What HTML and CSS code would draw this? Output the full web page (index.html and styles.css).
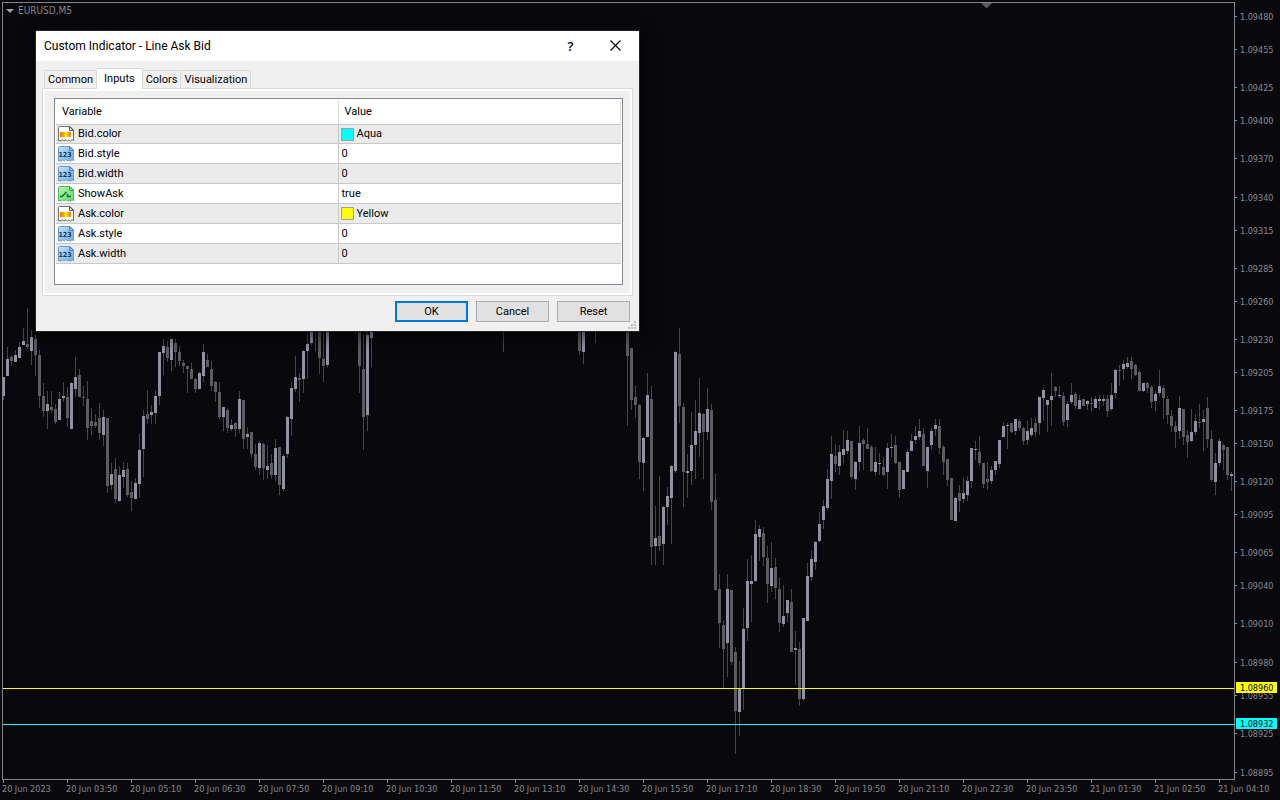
FILE: index.html
```html
<!DOCTYPE html>
<html lang="en">
<head>
<meta charset="utf-8">
<title>EURUSD,M5</title>
<link rel="stylesheet" href="styles.css">
</head>
<body>
<svg class="defs" aria-hidden="true">
  <defs>
    <linearGradient id="blue" x1="0" y1="0" x2="1" y2="1"><stop offset="0" stop-color="#c4e2fb"/><stop offset="1" stop-color="#6fa9e0"/></linearGradient>
    <linearGradient id="green" x1="0" y1="0" x2="1" y2="1"><stop offset="0" stop-color="#b4f5b4"/><stop offset="1" stop-color="#5fdc6c"/></linearGradient>
    <linearGradient id="orange" x1="0" y1="0" x2="1" y2="0"><stop offset="0" stop-color="#ff7000"/><stop offset=".2" stop-color="#ff8c00"/><stop offset=".55" stop-color="#fff000"/><stop offset=".85" stop-color="#ff9000"/><stop offset="1" stop-color="#ff7000"/></linearGradient>
    <symbol id="i-num" viewBox="0 0 16 16">
      <path d="M.5 1.5q0-1 1-1H12L15.500 4V15l-1.500-1.500L12.500 15.500 11 14 9.500 15 8 13.500 6 15 4.500 13.500 3 15.500 2 14 .5 15z" fill="url(#blue)" stroke="#6a9bcb"/>
      <path d="M11.500.5v4h4z" fill="#8fbce6" stroke="#4e86bd"/>
      <text x="7" y="11" text-anchor="middle" class="icon-text">123</text>
    </symbol>
    <symbol id="i-bool" viewBox="0 0 16 16">
      <path d="M.5 1.5q0-1 1-1H12L15.500 4V15l-1.500-1.500L12.500 15.500 11 14 9.500 15 8 13.500 6 15 4.500 13.500 3 15.500 2 14 .5 15z" fill="url(#green)" stroke="#4dbb5c"/>
      <path d="M11.500.5v4h4z" fill="#8ae894" stroke="#3aa64b"/>
      <path d="M2 10.500h2l4.500-4.500M9.500 8v2.500h3.500" fill="none" stroke="#12701c" stroke-width="1.500"/>
    </symbol>
    <symbol id="i-color" viewBox="0 0 16 16">
      <path d="M.5 1.500q0-1 1-1H12L15.500 4V15l-1.500-1.500L12.500 15.500 11 14 9.500 15 8 13.500 6 15 4.500 13.500 3 15.500 2 14 .5 15z" fill="#fff" stroke="#707070"/>
      <path d="M11.500.5v4h4z" fill="#ddd" stroke="#555"/>
      <path d="M2 6h11v5H2z" fill="url(#orange)"/>
    </symbol>
  </defs>
</svg>

<main class="terminal">
  <div class="plot">
    <svg class="canvas" id="plot" role="img" aria-label="EURUSD five-minute candlestick chart"></svg>
    <div class="symbol"><span class="caret"></span>EURUSD,M5</div>
  </div>
  <svg class="axis" id="prices"></svg>
  <svg class="axis times" id="times"></svg>
</main>

<section class="dialog" role="dialog" aria-labelledby="dialog-title">
  <header class="titlebar">
    <h1 id="dialog-title">Custom Indicator - Line Ask Bid</h1>
    <button class="caption help" aria-label="Help">?</button>
    <button class="caption" aria-label="Close"><svg width="11" height="11" viewBox="0 0 11 11"><path d="M.5.5l10 10M10.500.5l-10 10" stroke="#000" stroke-width="1.100"/></svg></button>
  </header>
  <div class="content">
    <nav class="tabs" role="tablist">
      <button class="tab" role="tab">Common</button>
      <button class="tab active" role="tab" aria-selected="true">Inputs</button>
      <button class="tab" role="tab">Colors</button>
      <button class="tab" role="tab">Visualization</button>
    </nav>
    <div class="panel">
      <div class="list">
        <table>
          <thead><tr><th>Variable</th><th>Value</th></tr></thead>
          <tbody>
            <tr><td><div class="cell"><svg class="icon"><use href="#i-color"/></svg>Bid.color</div></td><td><div class="cell color"><span class="swatch aqua"></span>Aqua</div></td></tr>
            <tr><td><div class="cell"><svg class="icon"><use href="#i-num"/></svg>Bid.style</div></td><td><div class="cell value">0</div></td></tr>
            <tr><td><div class="cell"><svg class="icon"><use href="#i-num"/></svg>Bid.width</div></td><td><div class="cell value">0</div></td></tr>
            <tr><td><div class="cell"><svg class="icon"><use href="#i-bool"/></svg>ShowAsk</div></td><td><div class="cell value">true</div></td></tr>
            <tr><td><div class="cell"><svg class="icon"><use href="#i-color"/></svg>Ask.color</div></td><td><div class="cell color"><span class="swatch yellow"></span>Yellow</div></td></tr>
            <tr><td><div class="cell"><svg class="icon"><use href="#i-num"/></svg>Ask.style</div></td><td><div class="cell value">0</div></td></tr>
            <tr><td><div class="cell"><svg class="icon"><use href="#i-num"/></svg>Ask.width</div></td><td><div class="cell value">0</div></td></tr>
          </tbody>
        </table>
      </div>
    </div>
    <footer class="actions">
      <button class="btn primary">OK</button>
      <button class="btn">Cancel</button>
      <button class="btn">Reset</button>
    </footer>
  </div>
  <svg class="grip" width="8" height="8" viewBox="0 0 8 8" aria-hidden="true"><path d="M6 0h2v2H6zM3 3h2v2H3zM6 3h2v2H6zM0 6h2v2H0zM3 6h2v2H3zM6 6h2v2H6z" fill="#bfbfbf"/></svg>
</section>
<script src="chart.js"></script>
</body>
</html>
```

FILE: styles.css
```css
* { box-sizing: border-box; }

body {
  margin: 0;
  background: #09080c;
  font: 11px/16px Roboto, "Liberation Sans", sans-serif;
  color: #000;
}

button { font: inherit; color: inherit; }

.defs { position: absolute; width: 0; height: 0; }
.icon-text { font: bold 7px "DejaVu Sans Condensed", "DejaVu Sans", sans-serif; fill: #0d3766; }

.terminal {
  display: grid;
  grid-template-columns: minmax(0, 1fr) 45px;
  grid-template-rows: minmax(0, 1fr) 20px;
  height: 100vh;
  padding: 2px 0 0 2px;
}

.plot { position: relative; border: 1px solid #82828a; overflow: hidden; }
.canvas { display: block; width: 100%; height: 100%; }
.symbol {
  position: absolute;
  top: 0;
  left: 3px;
  display: flex;
  align-items: center;
  gap: 4px;
  color: #82828a;
  font: 10px/16px "DejaVu Sans Condensed", "DejaVu Sans", sans-serif;
}
.caret { border: 4px solid transparent; border-top-color: #a0a0a8; border-bottom: 0; }

.axis {
  display: block;
  width: 100%;
  height: 100%;
  overflow: visible;
  font: 9px "DejaVu Sans Condensed", "DejaVu Sans", sans-serif;
  fill: #8a8a92;
}
.times { grid-column: 1 / -1; }

.wick { fill: #464648; }
.up { fill: #9091a1; }
.down { fill: #5c5c60; }
.ask { fill: #ffff00; }
.bid { fill: #00ffff; }
.tag-text { fill: #000; }

.dialog {
  position: absolute;
  top: 31px;
  left: 36px;
  width: 603px;
  background: #f0f0f0;
  outline: 1px solid #242424;
  box-shadow: 2px 4px 14px 2px rgba(0, 0, 0, .6);
}

.titlebar { display: flex; align-items: center; height: 30px; padding: 0 1px 0 8px; background: #fff; }
.titlebar h1 { flex: 1; margin: 0; font: 12px/16px Roboto, "Open Sans", sans-serif; }
.caption { display: grid; place-items: center; width: 45px; height: 30px; padding: 0 0 1px; border: 0; background: none; }
.help { font: 600 13px/16px "Open Sans", sans-serif; }

.content { padding: 7px 6px 9px; }

.tabs { display: flex; align-items: flex-end; padding-left: 2px; }
.tab {
  height: 18px;
  margin-top: 2px;
  padding: 0 3px;
  border: 1px solid #d9d9d9;
  border-bottom: 0;
  border-left: 0;
  background: #f0f0f0;
  white-space: nowrap;
}
.tab:first-child { border-left: 1px solid #d9d9d9; }
.tab.active { z-index: 1; height: 21px; margin: 0 0 -1px; padding: 0 7px 1px; background: #fff; }

.panel { padding: 9px 9px 10px 8px; border: 1px solid #d9d9d9; background: #f0f0f0; box-shadow: inset 0 0 0 2px #fff; }
.list { min-height: 187px; margin-left: 3px; padding: 1px; border: 1px solid #828790; background: #fff; }

table { width: 100%; border-collapse: separate; border-spacing: 0; table-layout: fixed; }
th { height: 25px; padding: 0 6px; border-right: 1px solid #e0e0e0; border-bottom: 1px solid #c8c8c8; font-weight: normal; text-align: left; }
td { height: 20px; padding: 0; border-bottom: 1px solid #c8c8c8; }
td:first-child { border-right: 1px solid #c8c8c8; }
tbody tr:first-child td { height: 19px; }
tbody tr:nth-child(odd) { background: #ebebeb; }
.cell { display: flex; align-items: center; gap: 4px; padding-left: 2px; }
.cell.value { padding-left: 3px; }
.cell.color { gap: 3px; }
.icon { width: 16px; height: 16px; }
.swatch { width: 13px; height: 13px; border: 1px solid #a0a0a0; }
.aqua { background: #00ffff; }
.yellow { background: #ffff00; }

.actions { display: flex; justify-content: flex-end; gap: 8px; padding: 5px 3px 0 0; }
.btn { width: 73px; height: 21px; padding: 0; border: 1px solid #adadad; background: #e1e1e1; }
.btn.primary { border: 2px solid #0078d7; }

.grip { position: absolute; right: 3px; bottom: 2px; }
```

FILE: chart.js
```js
// Each candle: slot, high, body top, body bottom, low, direction (1 rising, 0 falling).
// Slots are four pixels apart.
const candles = `
0 377 377 396 400 1|1 347 359 376 376 1|2 355 357 361 366 0|3 350 355 362 362 1|4 342 347 358 358 1|5 328 341 345 345 1
6 308 344 347 349 0|7 330 337 351 365 1|8 335 339 355 376 0|9 350 355 396 408 0|10 383 396 411 417 0|11 391 404 411 429 1
12 391 407 410 413 0|13 404 409 422 424 0|14 392 399 420 420 1|15 382 396 398 402 1|16 387 397 418 427 0|17 382 383 429 429 1
18 357 377 389 397 1|19 369 375 397 397 0|20 386 397 398 406 0|21 381 399 428 440 0|22 408 421 426 435 0|23 414 422 426 428 0
24 403 418 433 440 0|25 410 417 435 446 1|26 418 418 486 493 0|27 463 474 485 490 1|28 458 469 499 503 0|29 466 475 501 502 1
30 462 470 477 488 1|31 463 469 495 497 0|32 481 492 498 511 0|33 478 483 499 499 1|34 434 450 484 498 1|35 410 416 449 477 1
36 390 414 419 424 0|37 405 412 415 424 1|38 390 396 413 424 1|39 352 352 396 405 1|40 339 346 353 375 1|41 341 347 358 362 0
42 339 339 360 371 1|43 339 343 352 367 0|44 346 352 361 366 0|45 360 363 366 373 0|46 366 366 369 393 0|47 363 369 379 379 0
48 378 379 389 393 0|49 372 373 389 389 1|50 344 352 376 382 1|51 354 360 367 367 0|52 361 369 386 391 0|53 381 382 392 402 0
54 382 392 417 419 0|55 407 407 417 431 1|56 408 410 428 433 0|57 419 425 429 431 1|58 422 423 429 437 0|59 391 399 429 433 1
60 400 400 439 449 0|61 427 434 437 449 1|62 432 432 454 458 0|63 444 454 467 470 0|64 441 443 468 475 1|65 443 444 468 480 0
66 445 466 470 479 1|67 454 463 475 479 0|68 439 448 475 481 1|69 447 447 485 495 0|70 454 456 489 491 1|71 416 417 454 458 1
72 382 388 419 436 1|73 356 377 389 392 1|74 373 378 380 402 0|75 350 351 379 393 1|76 335 344 351 379 1|77 325 325 343 345 1
78 325 325 325 351 0|79 325 325 358 374 0|80 325 359 366 382 0|81 325 325 365 367 1|88 325 325 325 334 0|89 325 332 366 393 0
90 335 369 417 450 0|91 325 335 415 431 1|92 325 325 338 367 1|125 325 325 325 352 0|144 325 325 351 355 0|145 325 325 352 364 1
148 325 325 325 343 0|156 325 325 356 426 0|157 348 348 400 410 0|158 386 397 405 418 0|159 404 405 462 479 0|160 436 438 463 491 1
161 373 395 437 437 1|162 386 399 547 565 0|163 506 538 546 565 1|164 476 536 546 551 0|165 506 507 544 565 1|166 487 496 507 525 1
167 465 466 498 544 1|168 351 352 471 473 1|169 328 354 406 423 0|170 403 407 472 507 0|171 454 471 473 498 1|172 412 445 471 485 1
173 400 431 445 479 1|174 378 413 433 457 1|175 413 414 432 479 0|176 388 409 432 440 1|177 404 410 502 510 0|178 474 500 590 591 0
179 574 589 623 648 0|180 620 625 649 688 0|181 574 589 643 677 1|182 590 590 662 665 0|183 647 652 711 754 0|184 661 688 712 736 1
185 608 629 688 710 1|186 559 581 628 641 1|187 555 581 584 622 1|188 520 534 581 582 1|189 525 529 537 561 1|190 527 533 557 566 0
191 546 558 584 603 0|192 542 568 586 592 1|193 558 567 588 599 0|194 578 589 623 632 0|195 585 616 624 627 1|196 600 600 613 622 1
197 589 602 652 652 0|198 631 648 650 685 1|199 642 649 699 706 0|200 618 618 699 701 1|201 563 576 621 621 1|202 550 559 577 581 1
203 541 542 562 570 1|204 512 524 541 542 1|205 500 506 520 529 1|206 469 479 508 510 1|207 436 454 481 499 1|208 444 456 464 472 0
209 445 452 466 475 1|210 430 449 455 463 1|211 431 440 451 454 1|212 441 441 477 479 0|213 461 462 479 490 1|214 426 443 462 471 1
215 438 440 444 470 0|216 428 444 449 449 0|217 445 447 471 472 0|218 447 462 472 476 1|219 453 463 464 475 1|220 457 467 475 476 0
221 443 448 472 489 1|222 434 447 448 457 1|223 436 445 463 464 0|224 462 462 490 498 0|225 470 470 489 489 1|226 449 452 472 472 1
227 434 441 451 451 1|228 426 436 440 444 1|229 419 431 437 440 1|230 428 434 466 466 0|231 447 447 471 488 1|232 428 431 445 450 1
233 419 425 429 436 1|234 419 426 448 454 0|235 445 447 462 475 0|236 459 459 480 486 0|237 478 478 520 520 0|238 497 498 521 521 1
239 485 493 501 512 0|240 478 493 499 503 1|241 476 481 495 501 1|242 448 448 481 488 1|243 441 449 450 460 1|244 436 452 463 466 0
245 463 463 484 488 0|246 462 479 482 490 0|247 466 470 481 484 1|248 461 461 470 475 1|249 440 440 464 468 1|250 422 426 437 437 1
251 423 425 426 449 1|252 423 423 432 433 0|253 419 419 431 435 1|254 419 421 428 431 0|255 427 428 441 445 0|256 421 431 440 445 1
257 418 428 435 437 1|258 418 423 432 437 0|259 397 397 423 435 1|260 388 390 398 420 1|261 400 400 405 432 1|262 373 396 400 426 1
263 386 387 391 397 0|264 386 395 396 398 1|265 392 396 422 426 0|266 401 404 420 427 1|267 383 395 402 404 1|268 392 394 406 409 0
269 395 400 409 409 1|270 399 399 406 406 0|271 400 401 404 410 1|272 397 403 404 411 0|273 396 399 408 408 1|274 395 399 401 410 1
275 395 399 401 406 1|276 395 399 411 417 0|277 383 395 409 411 1|278 369 370 393 398 1|279 365 370 371 386 0|280 360 364 369 380 1
281 357 363 367 369 1|282 357 361 369 379 0|283 364 365 375 376 0|284 370 372 391 391 0|285 383 383 391 392 1|286 382 383 388 393 0
287 385 387 402 408 0|288 391 394 401 411 1|289 370 386 393 396 1|290 385 388 398 419 0|291 396 399 415 424 0|292 410 416 426 432 0
293 421 426 432 448 0|294 396 408 431 439 1|295 409 409 437 445 0|296 430 435 442 458 0|297 409 432 441 442 1|298 414 421 432 435 1
299 404 422 423 428 0|300 410 419 422 451 1|301 397 408 439 448 0|302 430 439 480 482 0|303 453 463 482 495 1|304 438 441 463 466 1
305 444 445 450 470 0|306 447 447 475 480 0|307 472 474 476 491 1`;

const ORIGIN = 3; // window offset of the plot's inner corner
const rect = (x, y, w, h, cls) => `<rect x="${x}" y="${y}" width="${w}" height="${h}" class="${cls}"/>`;

let plot = '';
for (const row of candles.trim().split(/[|\n]/)) {
  const [slot, high, top, bottom, low, rising] = row.split(' ').map(Number);
  const x = slot * 4;
  plot += rect(x, high - ORIGIN, 1, low - high, 'wick');
  plot += rect(x - 1, top - ORIGIN, 3, bottom - top, rising ? 'up' : 'down');
}
plot += rect(0, 685, '100%', 1, 'ask') + rect(0, 721, '100%', 1, 'bid');
plot += '<path d="M978 0h11l-5 5h-1z" fill="#5c5c60"/>';
document.getElementById('plot').innerHTML = plot;

const priceRows = [
  ['1.09480', 16], ['1.09455', 49], ['1.09425', 87], ['1.09400', 120], ['1.09370', 158], ['1.09340', 197],
  ['1.09315', 230], ['1.09285', 268], ['1.09260', 301], ['1.09230', 339], ['1.09205', 372], ['1.09175', 410],
  ['1.09150', 443], ['1.09120', 481], ['1.09095', 514], ['1.09065', 552], ['1.09040', 585], ['1.09010', 623],
  ['1.08980', 662], ['1.08955', 695], ['1.08925', 733], ['1.08895', 772]
];
let axis = '';
for (const [label, y] of priceRows) {
  axis += rect(0, y - 2, 2, 1, '') + `<text x="5" y="${y + 2}">${label}</text>`;
}
for (const [label, y, cls] of [['1.08960', 688, 'ask'], ['1.08932', 724, 'bid']]) {
  axis += rect(1, y - 8, 41, 11, cls) + `<text x="5" y="${y + 1}" class="tag-text">${label}</text>`;
}
document.getElementById('prices').innerHTML = axis;

const times = ['20 Jun 2023', '20 Jun 03:50', '20 Jun 05:10', '20 Jun 06:30', '20 Jun 07:50', '20 Jun 09:10',
  '20 Jun 10:30', '20 Jun 11:50', '20 Jun 13:10', '20 Jun 14:30', '20 Jun 15:50', '20 Jun 17:10', '20 Jun 18:30',
  '20 Jun 19:50', '20 Jun 21:10', '20 Jun 22:30', '20 Jun 23:50', '21 Jun 01:30', '21 Jun 02:50', '21 Jun 04:10'];
document.getElementById('times').innerHTML = times
  .map((t, i) => rect(i * 64 + 1, 0, 1, 3, '') + `<text x="${i * 64}" y="12">${t}</text>`)
  .join('');
```
